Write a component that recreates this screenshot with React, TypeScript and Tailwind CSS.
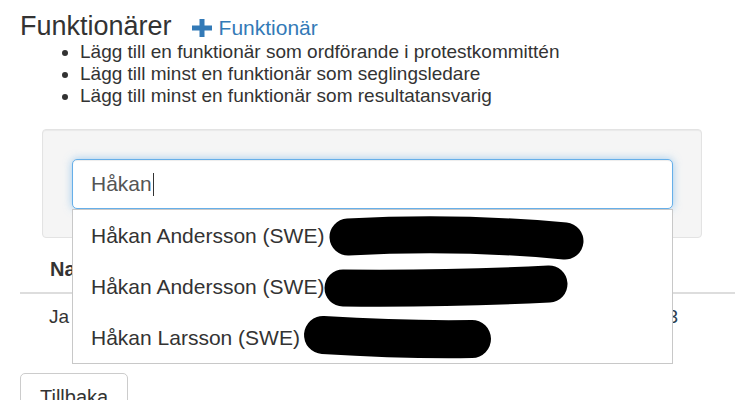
import React from 'react';

const items = ['Håkan Andersson (SWE)', 'Håkan Andersson (SWE)', 'Håkan Larsson (SWE)'];

function PlusIcon() {
  return (
    <svg width="20" height="18" viewBox="0 0 20 18" className="translate-y-[2px]">
      <rect x="0" y="6.5" width="20" height="5" fill="#337ab7" />
      <rect x="7.5" y="0" width="5" height="18" fill="#337ab7" />
    </svg>
  );
}

export default function App() {
  return (
    <div className="relative h-[400px] w-[735px] overflow-hidden bg-white font-['Liberation_Sans',Arial,sans-serif] text-[#333]">
      <div className="pl-5 pt-[11px]">
        <div className="flex items-baseline">
          <h3 className="text-[27px] leading-[30px] font-normal">Funktionärer</h3>
          <a className="ml-5 flex items-baseline gap-[7px] text-[21px] leading-[24px] text-[#337ab7]">
            <PlusIcon />
            <span>Funktionär</span>
          </a>
        </div>
        <ul className="list-disc pl-[60px] text-[19px] leading-[22px]">
          <li>Lägg till en funktionär som ordförande i protestkommittén</li>
          <li>Lägg till minst en funktionär som seglingsledare</li>
          <li>Lägg till minst en funktionär som resultatansvarig</li>
        </ul>
      </div>

      <div className="mt-[22px] ml-[42px] h-[109px] w-[660px] rounded-[4px] border border-[#e3e3e3] bg-[#f5f5f5] pl-[29px] pt-[29px] shadow-[inset_0_1px_1px_rgba(0,0,0,0.05)]">
        <div className="relative w-[601px]">
          <div className="flex h-[50px] items-center rounded-[5px] border border-[#66afe9] bg-white px-[18px] text-[21px] shadow-[inset_0_1px_1px_rgba(0,0,0,0.075),0_0_8px_rgba(102,175,233,0.6)]">
            <span className="text-[#555]">Håkan</span>
            <span className="ml-[1px] h-[23px] w-px bg-[#333]" />
          </div>

          <div className="absolute left-0 top-[50px] z-10 w-[601px] border border-[#c8c8c8] bg-white">
            {items.map((name, i) => (
              <div key={i} className="flex h-[51px] items-center px-[18px] text-[21px] text-[#333]">
                {name}
              </div>
            ))}
            <svg className="pointer-events-none absolute left-0 top-0" width="601" height="155" viewBox="0 0 601 155">
              <g fill="none" stroke="#000" strokeLinecap="round">
                <path d="M275 27 Q385 21 492 31" strokeWidth="37" />
                <path d="M270 78 Q380 79 476 74" strokeWidth="37" />
                <path d="M250 125 Q330 130 399 129" strokeWidth="38" />
              </g>
            </svg>
          </div>
        </div>
      </div>

      <div className="ml-5 w-[740px]">
        <div className="mt-[8px] border-b-2 border-[#ddd] pl-[30px] pt-[11px] pb-[11px] text-[20px] leading-[24px] font-bold">
          Namn
        </div>
        <div className="flex pl-[29px] pr-[82px] pt-[12px] pb-[12px] text-[19px] leading-[22px]">
          <span>Ja Svensson</span>
          <span className="ml-auto text-[#2c3e50]">2013</span>
        </div>
      </div>

      <div className="ml-5 mt-[33px]">
        <button className="rounded-[5px] border border-[#ccc] bg-white px-[19px] py-[11px] text-[20px] leading-[24px] text-[#333]">
          Tillbaka
        </button>
      </div>
    </div>
  );
}
